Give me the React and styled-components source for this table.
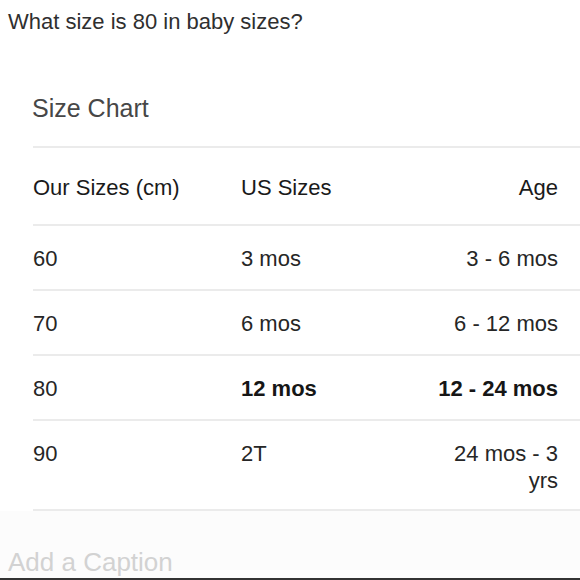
import React from "react";
import styled, { createGlobalStyle } from "styled-components";

const Global = createGlobalStyle`
  html, body {
    margin: 0;
    padding: 0;
    background: #ffffff;
  }
  body {
    font-family: "Liberation Sans", Arial, Helvetica, sans-serif;
  }
`;

const Page = styled.div`
  width: 580px;
  height: 580px;
  display: flex;
  flex-direction: column;
  background: #ffffff;
  overflow: hidden;
`;

const Question = styled.div`
  padding: 9px 0 0 8px;
  font-size: 22px;
  line-height: 25px;
  color: #2f2f2f;
`;

const Card = styled.div`
  margin-top: 59px;
  padding-left: 33px;
`;

const Title = styled.h2`
  margin: 0 0 23px -1px;
  font-size: 25px;
  line-height: 30px;
  font-weight: 400;
  color: #474747;
`;

const Table = styled.div`
  display: flex;
  flex-direction: column;
  border-top: 2px solid #ebebeb;
`;

const Row = styled.div`
  display: grid;
  grid-template-columns: 208px 1fr 125px;
  padding: ${(p) => (p.$header ? "26px 22px 23px 0" : "19px 22px 17px 0")};
  border-bottom: 2px solid #ebebeb;
  font-size: 22px;
  line-height: 27px;
  color: ${(p) => (p.$header ? "#1a1a1a" : "#262626")};

  &:last-child {
    padding-bottom: 15px;
  }
`;

const Cell = styled.div`
  text-align: ${(p) => (p.$right ? "right" : "left")};
  font-weight: ${(p) => (p.$bold ? 700 : 400)};
  color: ${(p) => (p.$bold ? "#161616" : "inherit")};
`;

const CaptionArea = styled.div`
  flex: 1;
  display: flex;
  align-items: flex-end;
  padding: 0 0 1px 8px;
  background: #fcfcfc;
`;

const Caption = styled.div`
  font-size: 26px;
  line-height: 30px;
  color: #d2d2d2;
`;

const BottomBar = styled.div`
  height: 2px;
  background: #333333;
`;

const rows = [
  { cm: "60", us: "3 mos", age: "3 - 6 mos" },
  { cm: "70", us: "6 mos", age: "6 - 12 mos" },
  { cm: "80", us: "12 mos", age: "12 - 24 mos", bold: true },
  { cm: "90", us: "2T", age: "24 mos - 3 yrs" },
];

export default function App() {
  return (
    <>
      <Global />
      <Page>
        <Question>What size is 80 in baby sizes?</Question>
        <Card>
          <Title>Size Chart</Title>
          <Table>
            <Row $header>
              <Cell>Our Sizes (cm)</Cell>
              <Cell>US Sizes</Cell>
              <Cell $right>Age</Cell>
            </Row>
            {rows.map((r) => (
              <Row key={r.cm}>
                <Cell>{r.cm}</Cell>
                <Cell $bold={r.bold}>{r.us}</Cell>
                <Cell $right $bold={r.bold}>
                  {r.age}
                </Cell>
              </Row>
            ))}
          </Table>
        </Card>
        <CaptionArea>
          <Caption>Add a Caption</Caption>
        </CaptionArea>
        <BottomBar />
      </Page>
    </>
  );
}
